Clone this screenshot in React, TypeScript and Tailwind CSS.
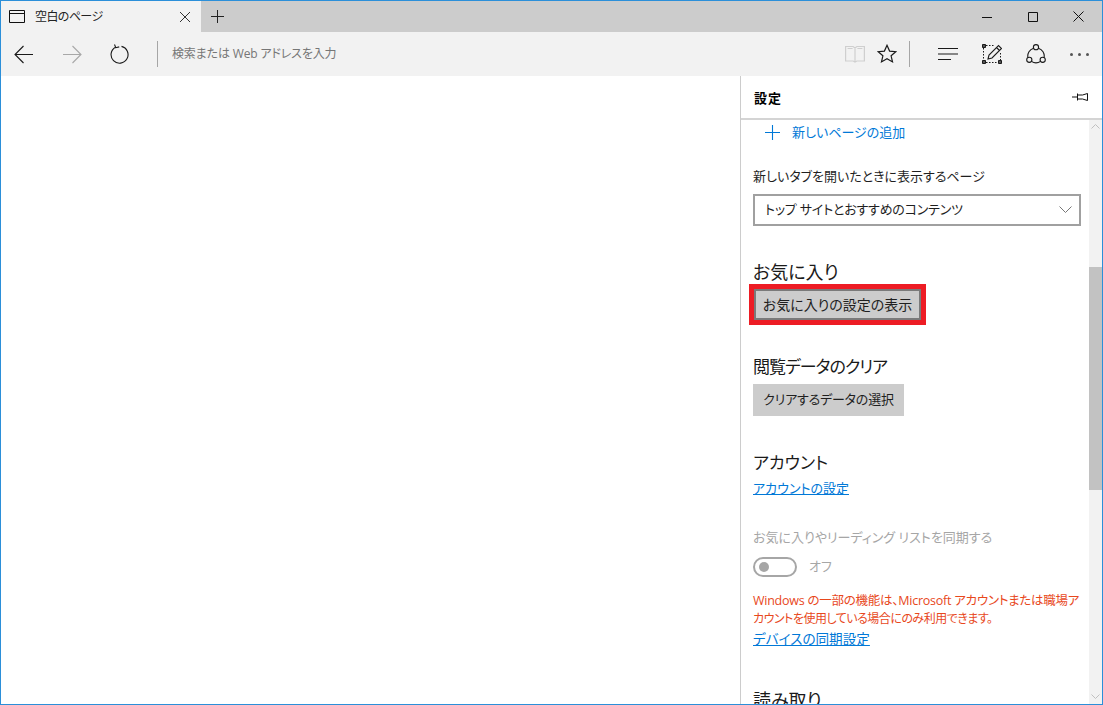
import React from "react";

function Toolbar() {
  return (
    <div className="h-[44px] bg-[#f2f2f2] flex items-center shrink-0">
      <svg width="20" height="19" viewBox="0 0 20 19" className="ml-[13px] text-[#1a1a1a]" fill="none" stroke="currentColor" strokeWidth="1.1"><path d="M19 9.500H1M9.500 1 1 9.500 9.500 18" /></svg>
      <svg width="20" height="19" viewBox="0 0 20 19" className="ml-[28px] text-[#a8a8a8]" fill="none" stroke="currentColor" strokeWidth="1.1"><path d="M1 9.500h18M10.500 1 19 9.500 10.500 18" /></svg>
      <svg width="19" height="20" viewBox="0 0 19 20" className="ml-[28px] text-[#1a1a1a]" fill="none" stroke="currentColor" strokeWidth="1.1"><path d="M5.500 3.200A8.500 8.500 0 1 0 11.500 2.400M4.500.5l1.300 3.200 3.400-.8" /></svg>
      <div className="ml-[28px] w-px h-[26px] bg-[#a6a6a6]" />
      <div className="ml-[14px] text-[12px] tracking-[-0.15px] text-[#767676] flex-1">検索または Web アドレスを入力</div>
      <svg width="20" height="18" viewBox="0 0 20 18" className="text-[#cfcfcf]" fill="none" stroke="currentColor" strokeWidth="1.2"><path d="M.6 1.500h7.500L10 3l1.900-1.500h7.500v14.500h-7.500L10 17l-1.900-1H.6zM10 3v14M2.600 3.500h5M12.400 3.500h5" /></svg>
      <svg width="20" height="20" viewBox="0 0 20 20" className="ml-[12px] text-[#1a1a1a]" fill="none" stroke="currentColor" strokeWidth="1.2"><path d="M10 1.300l2.600 5.800 6.200.6-4.700 4.100 1.400 6.100L10 14.700l-5.500 3.200 1.400-6.100L1.200 7.700l6.200-.6z" /></svg>
      <div className="ml-[12px] w-px h-[26px] bg-[#a6a6a6]" />
      <svg width="20" height="14" viewBox="0 0 20 14" className="ml-[28px] text-[#1a1a1a]" fill="none" stroke="currentColor" strokeWidth="1.1"><path d="M0 1.500h20M0 7h20M0 12.500h13" /></svg>
      <svg width="20" height="20" viewBox="0 0 20 20" className="ml-[24px] text-[#1a1a1a]" fill="none" stroke="currentColor"><path d="M4 1.500h8M1.500 4v12M18.500 9v7M4 18.500h12" strokeWidth="1" strokeDasharray="1.500 1.500" /><path d="M.5.500h3v3h-3zM.5 16.500h3v3h-3zM16.500 16.500h3v3h-3z" strokeWidth="1" fill="#555" /><path d="M6 15l1-4L16.500 1.500l3 3L10 14zM14.500 3.500l3 3" strokeWidth="1.100" /></svg>
      <svg width="20" height="20" viewBox="0 0 20 20" className="ml-[24px] text-[#1a1a1a]" fill="none" stroke="currentColor" strokeWidth="1.1"><circle cx="10" cy="3.200" r="2.600" /><circle cx="3.300" cy="15.800" r="2.600" /><circle cx="16.700" cy="15.800" r="2.600" /><path d="M7.600 4.200A8.300 8.300 0 0 0 1.900 13.600M12.400 4.200A8.300 8.300 0 0 1 18.100 13.600M5.400 17.400a8.300 8.300 0 0 0 9.200 0" /></svg>
      <div className="ml-[24px] mr-[13px] flex gap-[5px]">
        <span className="w-[3px] h-[3px] rounded-full bg-[#555555]" />
        <span className="w-[3px] h-[3px] rounded-full bg-[#555555]" />
        <span className="w-[3px] h-[3px] rounded-full bg-[#555555]" />
      </div>
    </div>
  );
}

function Panel() {
  return (
    <div className="w-[362px] shrink-0 border-l border-[#cccccc] bg-white flex flex-col h-full">
      <div className="h-[44px] shrink-0 border-b-2 border-[#d4d4d4] flex items-center justify-between pl-[13px] pr-[14px] pt-[3px]">
        <span className="text-[13px] font-bold text-black tracking-[1px]">設定</span>
        <svg width="16" height="10" viewBox="0 0 16 10" fill="none" stroke="#111" strokeWidth="1" className="-mt-[3px]"><path d="M0 5h5M5.500 1.500v7M5.500 3h5l5-1.500v7L10.500 7h-5" /></svg>
      </div>
      <div className="flex-1 flex min-h-0">
        <div className="w-[348px] overflow-hidden pl-[12px] text-[13px] text-[#1f1f1f]">
          <div className="h-[24px] flex items-center text-[#0078d7] pl-[12px]">
            <svg width="15" height="15" viewBox="0 0 15 15" fill="none" stroke="currentColor" strokeWidth="1.100"><path d="M7.500 0v15M0 7.500h15" /></svg>
            <span className="ml-[12px] leading-[20px]">新しいページの追加</span>
          </div>
          <div className="mt-[22px] leading-[20px] h-[20px]">新しいタブを開いたときに表示するページ</div>
          <div className="mt-[8px] w-[328px] h-[32px] border-2 border-[#a0a0a0] flex items-center justify-between pl-[10px] pr-[7px]">
            <span className="tracking-[-0.2px]">トップ サイトとおすすめのコンテンツ</span>
            <svg width="13" height="8" viewBox="0 0 13 8" fill="none" stroke="#777" strokeWidth="1"><path d="M.5.500l6 6 6-6" /></svg>
          </div>
          <div className="mt-[34px] text-[18px] leading-[24px] text-[#1a1a1a]">お気に入り</div>
          <div className="-ml-[4px] w-[177px] h-[41px] border-[5px] border-[#ed1c24] flex">
            <div className="flex-1 bg-[#cccccc] border-2 border-[#7a7a7a] flex items-center justify-center whitespace-nowrap text-[14px]">お気に入りの設定の表示</div>
          </div>
          <div className="mt-[30px] text-[17px] tracking-[-1px] leading-[24px] text-[#1a1a1a]">閲覧データのクリア</div>
          <div className="mt-[5px] w-[151px] h-[32px] bg-[#cccccc] flex items-center justify-center whitespace-nowrap tracking-[-0.2px]">クリアするデータの選択</div>
          <div className="mt-[35px] text-[17px] leading-[24px] text-[#1a1a1a]">アカウント</div>
          <div className="mt-[3px] leading-[20px] text-[#0078d7] underline">アカウントの設定</div>
          <div className="mt-[29px] leading-[20px] text-[#a6a6a6]">お気に入りやリーディング リストを同期する</div>
          <div className="mt-[10px] flex items-center h-[20px]">
            <div className="w-[44px] h-[20px] rounded-full border-2 border-[#a6a6a6] flex items-center pl-[4px]">
              <span className="w-[10px] h-[10px] rounded-full bg-[#a6a6a6]" />
            </div>
            <span className="ml-[12px] text-[#a6a6a6]">オフ</span>
          </div>
          <div className="mt-[15px] leading-[18px] text-[#e8481c] whitespace-nowrap">
            <div className="text-[12.5px] tracking-[-0.25px]">Windows の一部の機能は、Microsoft アカウントまたは職場ア</div>
            <div className="text-[12px] tracking-[-0.5px]">カウントを使用している場合にのみ利用できます。</div>
          </div>
          <div className="text-[13.6px] leading-[22px] text-[#0078d7] underline">デバイスの同期設定</div>
          <div className="mt-[38px] text-[18px] leading-[24px] text-[#1a1a1a]">読み取り</div>
        </div>
        <div className="w-[13px] shrink-0 bg-[#f2f2f2] flex flex-col items-center">
          <svg width="9" height="5" viewBox="0 0 9 5" fill="none" stroke="#c0c0c0" className="mt-[4px]"><path d="M.5 4.500l4-4 4 4" /></svg>
          <div className="w-full h-[223px] bg-[#c2c2c2] mt-[138px]" />
          <div className="flex-1" />
          <svg width="9" height="5" viewBox="0 0 9 5" fill="none" stroke="#c0c0c0" className="mb-[5px]"><path d="M.5.500l4 4 4-4" /></svg>
        </div>
      </div>
    </div>
  );
}

export default function App() {
  return (
    <div
      className="w-[1103px] h-[705px] border border-[#2b8fd9] bg-white flex flex-col overflow-hidden [font-feature-settings:'palt']"
      style={{ fontFamily: '"Open Sans", "Noto Sans CJK JP", sans-serif' }}
    >
      <div className="h-[31px] bg-[#cccccc] flex shrink-0">
        <div className="w-[200px] bg-[#f2f2f2] flex items-center">
          <svg width="16" height="13" viewBox="0 0 16 13" className="ml-[8px]" fill="none" stroke="#111" strokeWidth="1"><path d="M.5.500h15v12H.5zM.5 3.500h15" /></svg>
          <span className="ml-[10px] text-[12px] tracking-[-0.6px] text-[#222] flex-1">空白のページ</span>
          <svg width="10" height="10" viewBox="0 0 10 10" className="mr-[11px]" fill="none" stroke="#333" strokeWidth="1"><path d="M0 0l10 10M10 0 0 10" /></svg>
        </div>
        <div className="ml-[10px] flex items-center">
          <svg width="13" height="13" viewBox="0 0 13 13" fill="none" stroke="#222" strokeWidth="1"><path d="M6.500 0v13M0 6.500h13" /></svg>
        </div>
        <div className="flex-1" />
        <div className="flex items-center">
          <svg width="10" height="10" viewBox="0 0 10 10" className="mr-[36px]" fill="none" stroke="#111" strokeWidth="1"><path d="M0 5.500h10" /></svg>
          <svg width="10" height="10" viewBox="0 0 10 10" className="mr-[35px]" fill="none" stroke="#111" strokeWidth="1"><path d="M.5.500h9v9h-9z" /></svg>
          <svg width="11" height="11" viewBox="0 0 11 11" className="mr-[18px]" fill="none" stroke="#111" strokeWidth="1"><path d="M.5.500l10 10M10.500.5l-10 10" /></svg>
        </div>
      </div>
      <Toolbar />
      <div className="flex-1 flex justify-end min-h-0">
        <Panel />
      </div>
    </div>
  );
}
